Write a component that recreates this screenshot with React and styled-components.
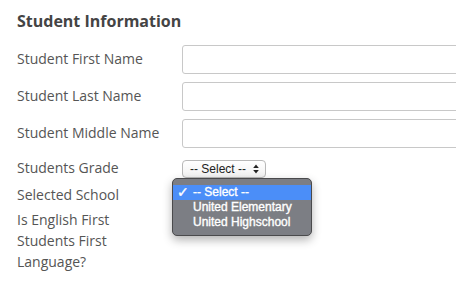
import React from "react";
import styled, { createGlobalStyle } from "styled-components";

const GlobalStyle = createGlobalStyle`
  body {
    margin: 0;
    background: #fff;
    font-family: "Open Sans", "Liberation Sans", sans-serif;
    overflow: hidden;
  }
`;

const Section = styled.div`
  padding: 9px 0 0 17px;
  width: 560px;
`;

const Heading = styled.h2`
  margin: 0 0 12px;
  font-size: 16px;
  font-weight: 700;
  color: #444;
  line-height: 24px;
`;

const Row = styled.div`
  display: grid;
  grid-template-columns: 165px 1fr;
  align-items: ${(p) => (p.top ? "start" : "center")};
  margin-top: ${(p) => p.gap || 0}px;
  min-height: ${(p) => p.h || 20}px;
`;

const Label = styled.label`
  font-size: 14px;
  color: #555;
  line-height: 21px;
  white-space: ${(p) => (p.wrap ? "normal" : "nowrap")};
  max-width: ${(p) => (p.wrap ? "125px" : "none")};
  padding-bottom: ${(p) => (p.wrap ? 0 : 3)}px;
  margin-top: ${(p) => (p.wrap ? -1 : 0)}px;
`;

const TextInput = styled.input`
  box-sizing: border-box;
  width: 320px;
  height: 29px;
  border: 1px solid #c8c8c8;
  border-radius: 3px;
  background: #fff;
  margin: 0;
`;

const SelectWrap = styled.div`
  position: relative;
  width: 84px;
`;

const SelectBox = styled.div`
  box-sizing: border-box;
  width: 84px;
  height: 18px;
  border: 1px solid #b8b8b8;
  border-radius: 4px;
  background: linear-gradient(#ffffff, #f1f1f1);
  display: flex;
  align-items: center;
  justify-content: space-between;
  padding: 0 6px 0 7px;
  font-family: "Liberation Sans", Arial, sans-serif;
  font-size: 12px;
  color: #222;
  visibility: ${(p) => (p.covered ? "hidden" : "visible")};
`;

const Arrows = styled.svg`
  width: 6px;
  height: 10px;
`;

const Menu = styled.ul`
  position: absolute;
  left: -10px;
  top: -9px;
  box-sizing: border-box;
  width: 140px;
  margin: 0;
  padding: 6px 0 5px;
  list-style: none;
  background: #7c7e84;
  border: 1px solid #4a4a4c;
  border-radius: 5px;
  box-shadow: 0 4px 10px rgba(0, 0, 0, 0.3);
  z-index: 2;
`;

const MenuItem = styled.li`
  position: relative;
  height: 15px;
  line-height: 15px;
  padding-left: 20px;
  font-family: "Liberation Sans", Arial, sans-serif;
  font-size: 12px;
  color: #fff;
  -webkit-text-stroke: 0.35px #fff;
  background: ${(p) => (p.active ? "#4b8ef8" : "transparent")};
`;

const Check = styled.span`
  position: absolute;
  left: 4px;
  top: 0;
  font-family: "DejaVu Sans", sans-serif;
  font-size: 14px;
  font-weight: 700;
`;

const UpDown = () => (
  <Arrows viewBox="0 0 6 10">
    <path d="M3 0.5 L5.8 4 H0.2 Z" fill="#222" />
    <path d="M3 9.5 L5.8 6 H0.2 Z" fill="#222" />
  </Arrows>
);

const fields = ["Student First Name", "Student Last Name", "Student Middle Name"];
const schools = ["-- Select --", "United Elementary", "United Highschool"];

export default function App() {
  return (
    <>
      <GlobalStyle />
      <Section>
        <Heading>Student Information</Heading>
        {fields.map((f, i) => (
          <Row key={f} h={29} gap={i === 0 ? 0 : 8}>
            <Label>{f}</Label>
            <TextInput />
          </Row>
        ))}
        <Row gap={9}>
          <Label>Students Grade</Label>
          <SelectWrap>
            <SelectBox>
              -- Select -- <UpDown />
            </SelectBox>
          </SelectWrap>
        </Row>
        <Row gap={3}>
          <Label>Selected School</Label>
          <SelectWrap>
            <SelectBox covered>
              -- Select -- <UpDown />
            </SelectBox>
            <Menu>
              {schools.map((s, i) => (
                <MenuItem key={s} active={i === 0}>
                  {i === 0 && <Check>✓</Check>}
                  {s}
                </MenuItem>
              ))}
            </Menu>
          </SelectWrap>
        </Row>
        <Row gap={2} top>
          <Label wrap>Is English First Students First Language?</Label>
          <div />
        </Row>
      </Section>
    </>
  );
}
